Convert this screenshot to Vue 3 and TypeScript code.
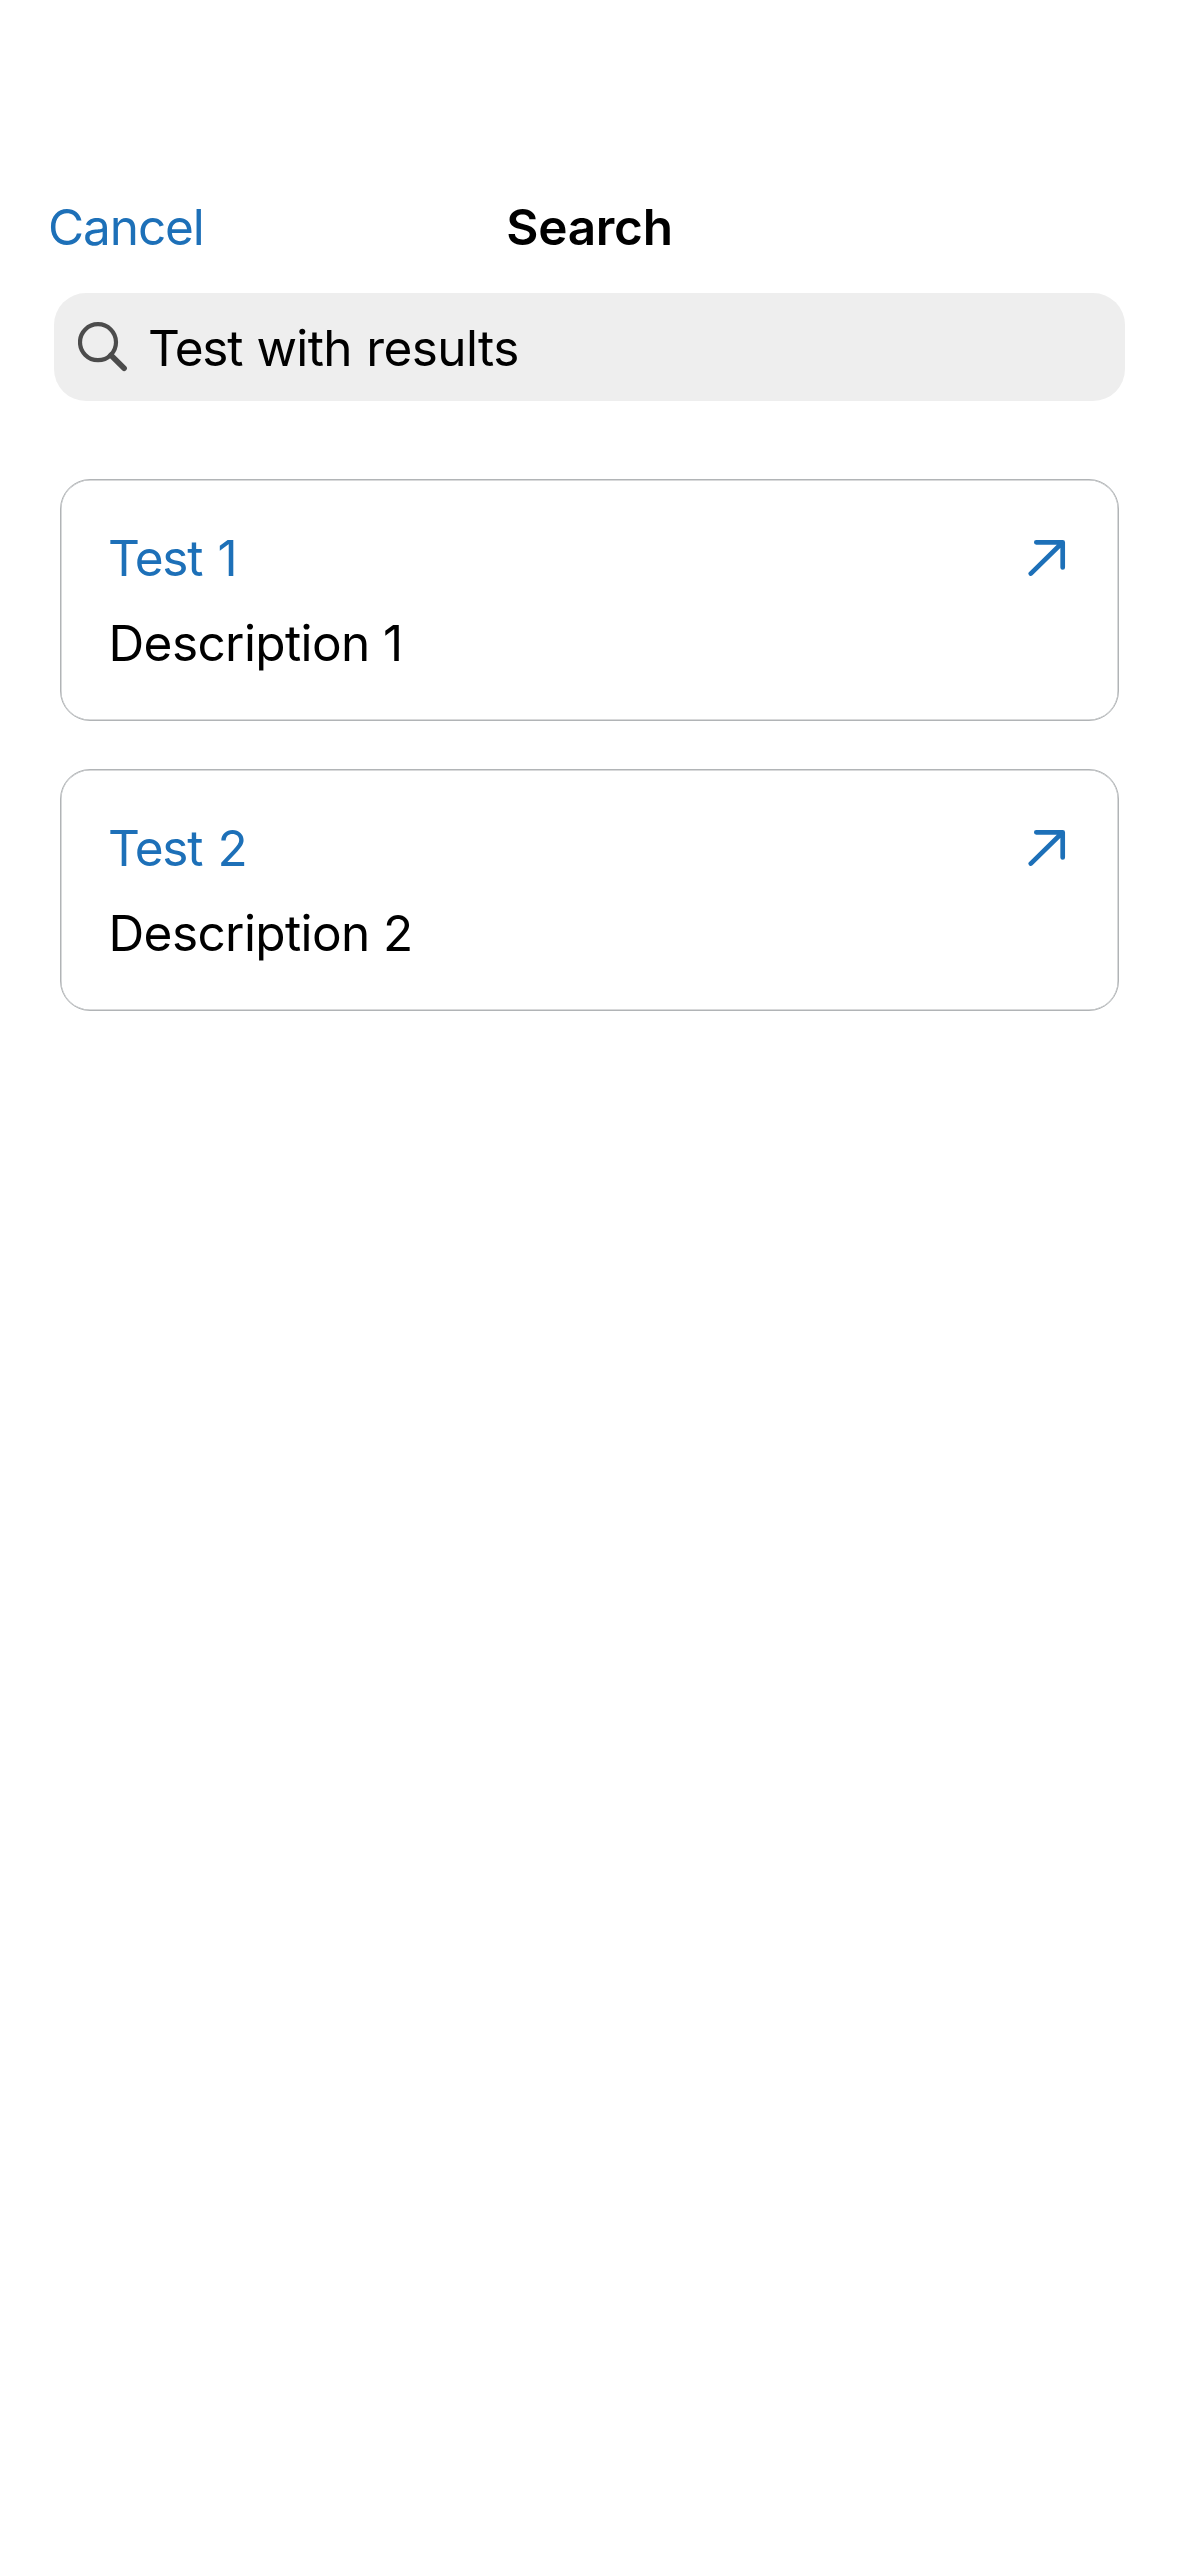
<script setup lang="ts">
interface Result {
  title: string
  index: number
  description: string
}

const query = { lead: 'Test', rest: ' with results' }

const results: Result[] = [
  { title: 'Test', index: 1, description: 'Description 1' },
  { title: 'Test', index: 2, description: 'Description 2' },
]
</script>

<template>
  <main class="screen">
    <header class="nav">
      <a class="cancel">Cancel</a>
      <h1 class="title">Search</h1>
      <span></span>
    </header>

    <div class="field">
      <svg class="glass" viewBox="0 0 50 50" aria-hidden="true">
        <circle cx="20" cy="20.2" r="18" fill="none" stroke="#4c4c4c" stroke-width="4.2" />
        <path d="M33 33.2 46.1 46.2" fill="none" stroke="#4c4c4c" stroke-width="5.6" stroke-linecap="round" />
      </svg>
      <p class="query"><span class="lead">{{ query.lead }}</span>{{ query.rest }}</p>
    </div>

    <ul class="results">
      <li v-for="r in results" :key="r.index" class="card">
        <div class="row">
          <a class="link"><span class="lead">{{ r.title }}</span>{{ ' ' + r.index }}</a>
          <svg class="arrow" viewBox="0 0 38 38" aria-hidden="true">
            <path
              d="M8.3 3.3H34.7V28.5M34 4 2.8 34.6"
              fill="none"
              stroke="#1d70b8"
              stroke-width="4.7"
              stroke-linecap="round"
              stroke-linejoin="round"
            />
          </svg>
        </div>
        <p class="description">{{ r.description }}</p>
      </li>
    </ul>
  </main>
</template>

<style>
body {
  background: #fff;
}
</style>

<style scoped>
.screen {
  box-sizing: border-box;
  width: 1179px;
  height: 2556px;
  padding-top: 197px;
  background: #fff;
  color: #000;
  font-family: Inter, 'Liberation Sans', sans-serif;
  font-size: 49.5px;
  line-height: 60px;
  letter-spacing: -0.6px;
}

.nav {
  display: grid;
  grid-template-columns: 1fr auto 1fr;
  padding: 0 48px;
  height: 60px;
}

.cancel,
.link {
  color: #1d70b8;
}

.cancel {
  letter-spacing: -1.1px;
}

.title {
  margin: 0;
  font-size: inherit;
  font-weight: 600;
  letter-spacing: -0.3px;
}

.field {
  display: flex;
  align-items: center;
  box-sizing: border-box;
  height: 108px;
  margin: 36px 54px 0;
  padding-left: 24px;
  border-radius: 32px;
  background: #eee;
}

.glass {
  width: 50px;
  height: 50px;
  margin-right: 20px;
}

.query,
.description {
  margin: 0;
}

.query {
  padding-top: 1px;
  word-spacing: 1px;
}

.lead {
  letter-spacing: -1.3px;
}

.link {
  word-spacing: 2px;
}

.results {
  display: flex;
  flex-direction: column;
  gap: 48px;
  margin: 78px 60px 0;
  padding: 0;
  list-style: none;
}

.card {
  box-sizing: border-box;
  height: 242px;
  padding: 48px 47px 0;
  border: 1px solid #b1b4b6;
  border-radius: 30px;
  box-shadow: inset 0 0 0 0.5px #b1b4b6;
}

.row {
  display: flex;
  align-items: center;
  justify-content: space-between;
}

.arrow {
  width: 38px;
  height: 38px;
  margin-right: 5px;
}

.description {
  margin-top: 25px;
  padding-left: 0.5px;
}
</style>
